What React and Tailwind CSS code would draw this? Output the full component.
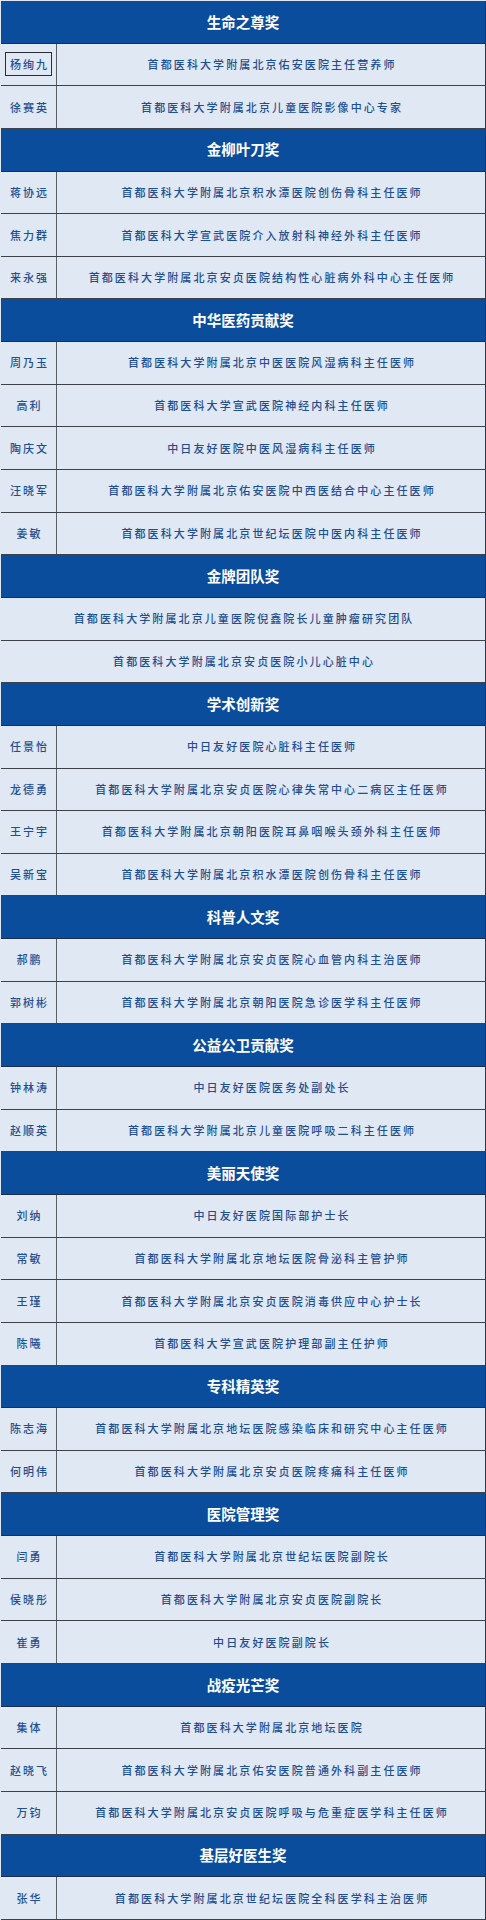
import React from "react";

const sections = [
  { title: "生命之尊奖", rows: [
    ["杨绚九", "首都医科大学附属北京佑安医院主任营养师", true],
    ["徐赛英", "首都医科大学附属北京儿童医院影像中心专家"],
  ]},
  { title: "金柳叶刀奖", rows: [
    ["蒋协远", "首都医科大学附属北京积水潭医院创伤骨科主任医师"],
    ["焦力群", "首都医科大学宣武医院介入放射科神经外科主任医师"],
    ["来永强", "首都医科大学附属北京安贞医院结构性心脏病外科中心主任医师"],
  ]},
  { title: "中华医药贡献奖", rows: [
    ["周乃玉", "首都医科大学附属北京中医医院风湿病科主任医师"],
    ["高利", "首都医科大学宣武医院神经内科主任医师"],
    ["陶庆文", "中日友好医院中医风湿病科主任医师"],
    ["汪晓军", "首都医科大学附属北京佑安医院中西医结合中心主任医师"],
    ["姜敏", "首都医科大学附属北京世纪坛医院中医内科主任医师"],
  ]},
  { title: "金牌团队奖", rows: [
    [null, "首都医科大学附属北京儿童医院倪鑫院长儿童肿瘤研究团队"],
    [null, "首都医科大学附属北京安贞医院小儿心脏中心"],
  ]},
  { title: "学术创新奖", rows: [
    ["任景怡", "中日友好医院心脏科主任医师"],
    ["龙德勇", "首都医科大学附属北京安贞医院心律失常中心二病区主任医师"],
    ["王宁宇", "首都医科大学附属北京朝阳医院耳鼻咽喉头颈外科主任医师"],
    ["吴新宝", "首都医科大学附属北京积水潭医院创伤骨科主任医师"],
  ]},
  { title: "科普人文奖", rows: [
    ["郝鹏", "首都医科大学附属北京安贞医院心血管内科主治医师"],
    ["郭树彬", "首都医科大学附属北京朝阳医院急诊医学科主任医师"],
  ]},
  { title: "公益公卫贡献奖", rows: [
    ["钟林涛", "中日友好医院医务处副处长"],
    ["赵顺英", "首都医科大学附属北京儿童医院呼吸二科主任医师"],
  ]},
  { title: "美丽天使奖", rows: [
    ["刘纳", "中日友好医院国际部护士长"],
    ["常敏", "首都医科大学附属北京地坛医院骨泌科主管护师"],
    ["王瑾", "首都医科大学附属北京安贞医院消毒供应中心护士长"],
    ["陈曦", "首都医科大学宣武医院护理部副主任护师"],
  ]},
  { title: "专科精英奖", rows: [
    ["陈志海", "首都医科大学附属北京地坛医院感染临床和研究中心主任医师"],
    ["何明伟", "首都医科大学附属北京安贞医院疼痛科主任医师"],
  ]},
  { title: "医院管理奖", rows: [
    ["闫勇", "首都医科大学附属北京世纪坛医院副院长"],
    ["侯晓彤", "首都医科大学附属北京安贞医院副院长"],
    ["崔勇", "中日友好医院副院长"],
  ]},
  { title: "战疫光芒奖", rows: [
    ["集体", "首都医科大学附属北京地坛医院"],
    ["赵晓飞", "首都医科大学附属北京佑安医院普通外科副主任医师"],
    ["万钧", "首都医科大学附属北京安贞医院呼吸与危重症医学科主任医师"],
  ]},
  { title: "基层好医生奖", rows: [
    ["张华", "首都医科大学附属北京世纪坛医院全科医学科主治医师"],
  ]},
];

const bodyFont = { fontFamily: '"Noto Sans CJK SC", "Noto Sans", sans-serif' };

function Spaced({ children, className = "" }) {
  return (
    <span className={"text-[11px] leading-none tracking-[2.1px] pl-[2.1px] text-[#1f4f90] font-medium " + className}>
      {children}
    </span>
  );
}

export default function App() {
  const items = [];
  sections.forEach((s, si) => {
    items.push(
      <div key={"h" + si} className="flex-1 flex items-center justify-center bg-[#0a4d9c] border-b border-[#1e2f4a]">
        <span className="text-white font-bold text-[14.5px] leading-none">{s.title}</span>
      </div>
    );
    s.rows.forEach((r, ri) => {
      const [name, desc, boxed] = r;
      items.push(
        <div key={"r" + si + "-" + ri} className="flex-1 flex bg-[#dfe8f3] border-b border-[#3d4149]">
          {name !== null && (
            <div className="w-[56px] shrink-0 flex items-center justify-center border-r border-[#5a5e66]">
              {boxed ? (
                <span className="border border-[#2a2d33] w-[47px] h-[24px] flex items-center justify-center">
                  <Spaced>{name}</Spaced>
                </span>
              ) : (
                <Spaced>{name}</Spaced>
              )}
            </div>
          )}
          <div className="flex-1 flex items-center justify-center">
            <Spaced>{desc}</Spaced>
          </div>
        </div>
      );
    });
  });
  return (
    <div style={bodyFont} className="w-[486px] h-[1920px] bg-[#dfe8f3] pt-[1px] pl-[1px]">
      <div className="h-full flex flex-col border-r border-[#2a3550]">{items}</div>
    </div>
  );
}
